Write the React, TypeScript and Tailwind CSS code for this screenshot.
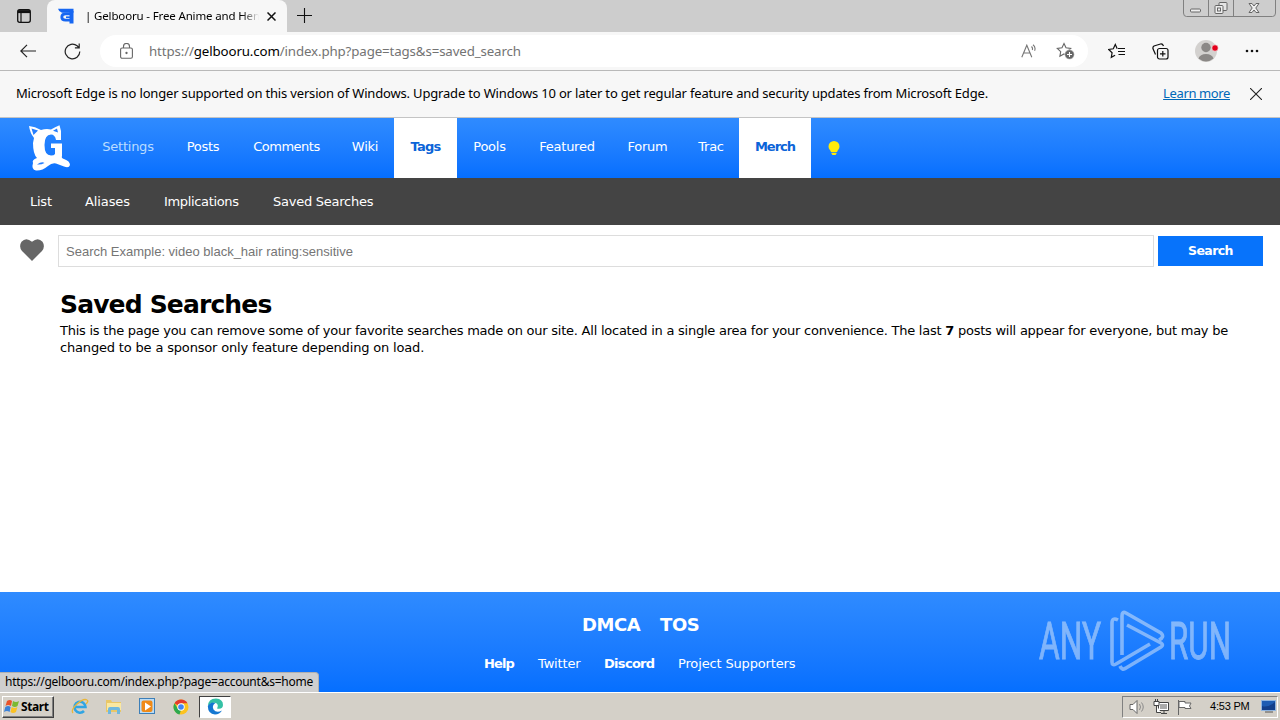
import React from "react";

const navItems = [
  { label: "Settings", width: "w-[84px]", style: "text-[#b9dcff]" },
  { label: "Posts", width: "w-[67px]", style: "text-white pr-px" },
  { label: "Comments", width: "w-[99px]", style: "text-white tracking-[-0.5px]" },
  { label: "Wiki", width: "w-[58px]", style: "text-white" },
  { label: "Tags", width: "w-[63px]", style: "bg-white font-bold text-[#0b64d8] tracking-[-0.7px]" },
  { label: "Pools", width: "w-[66px]", style: "text-white pr-px" },
  { label: "Featured", width: "w-[89px]", style: "text-white pr-px" },
  { label: "Forum", width: "w-[71px]", style: "text-white" },
  { label: "Trac", width: "w-[56px]", style: "text-white" },
  { label: "Merch", width: "w-[72px]", style: "bg-white font-bold text-[#0b64d8] tracking-[-1px]" },
];

const TabBar = () => (
  <div className="flex h-8 shrink-0 bg-[#cdcdcd]">
    <div className="flex w-[47px] items-center justify-center">
      <svg width="16" height="16" viewBox="0 0 16 16" fill="none" stroke="#111">
        <rect x="1.7" y="1.7" width="12.6" height="12.6" rx="2" strokeWidth="1.3" />
        <path d="M2 3.6h12" strokeWidth="3" />
        <path d="M5 4v10" strokeWidth="1.2" />
      </svg>
    </div>
    <div className="flex w-60 items-center rounded-t-lg bg-[#f7f7f7] pl-[11px]">
      <svg width="16" height="16" viewBox="0 0 16 16" fill="none" stroke="#1767f2">
        <path d="M0 .8h15.500v4H4Q.8 4 0 .8z" fill="#1767f2" stroke="none" />
        <path d="M13.500 3v12.500" strokeWidth="4" />
        <path d="M12 5.800H7.500Q3.800 5.800 3.800 9t3.700 3.200H12" strokeWidth="2.800" />
        <path d="M8 9.200h4" strokeWidth="1.600" />
      </svg>
      <div className="ml-[11px] w-[174px] overflow-hidden whitespace-nowrap text-[11.5px] tracking-[-0.15px] [mask-image:linear-gradient(to_right,#000_90%,transparent)]">
        | Gelbooru - Free Anime and Hen
      </div>
      <svg className="ml-[8px]" width="9" height="9" viewBox="0 0 9 9" stroke="#111" strokeWidth="1.5">
        <path d="M.5.5l8 8M8.500.5l-8 8" />
      </svg>
    </div>
    <svg className="ml-[10px] mt-2" width="15" height="15" viewBox="0 0 15 15" stroke="#111" strokeWidth="1.1">
      <path d="M7.500 0v15M0 7.500h15" />
    </svg>
    <svg className="ml-auto mr-1" width="93" height="18" viewBox="0 0 93 18" fill="none" stroke="#808080">
      <path d="M.5 0v13q0 3.500 3 3.500h86q3 0 3-3.500V0M25.500 0v16M50.500 0v16" />
      <g stroke="#666">
        <rect x="7.500" y="9" width="10" height="3" rx="1" fill="#eee" />
        <rect x="36" y="2.500" width="8" height="8" rx="1" fill="#e4e4e4" />
        <rect x="32" y="5.500" width="8" height="8" rx="1" fill="#eee" />
        <rect x="34.500" y="8" width="3" height="3" />
        <path d="M66 3.500h3l2 2.500 2-2.500h3l-3.200 4.500 3.200 4.500h-3l-2-2.500-2 2.500h-3l3.200-4.500z" fill="#eee" />
      </g>
    </svg>
  </div>
);

const starPath = "M8 1.500l2 4.300 4.700.6-3.400 3.200.8 4.700L8 12l-4.100 2.300.8-4.700L1.300 6.400 6 5.800z";

const AddressBar = () => (
  <div className="flex h-[39px] shrink-0 items-center border-b border-[#b9b9b9] bg-[#f7f7f7]">
    <svg className="ml-[20px]" width="16" height="14" viewBox="0 0 16 14" fill="none" stroke="#222" strokeWidth="1.2">
      <path d="M16 7H1M7 .8L.8 7 7 13.200" />
    </svg>
    <svg className="ml-[28px]" width="17" height="17" viewBox="0 0 17 17" fill="none" stroke="#222" strokeWidth="1.2">
      <path d="M15.800 8.500a7.300 7.300 0 1 1-2.700-5.700l2 1.900M15.200.5v4.300h-4.300" />
    </svg>
    <div className="ml-[19px] flex h-[32px] w-[988px] items-center rounded-full bg-white">
      <svg className="ml-[20px]" width="13" height="16" viewBox="0 0 13 16" fill="none" stroke="#666" strokeWidth="1.100">
        <rect x=".6" y="5" width="11.800" height="10.200" rx="1.500" />
        <path d="M3.500 5V3.500a3 3 0 0 1 6 0V5" />
        <circle cx="6.500" cy="10" r=".6" fill="#666" />
      </svg>
      <div className="ml-[16px] mt-px whitespace-nowrap text-[13.3px] tracking-[-0.13px] text-[#737373]">
        https://<span className="text-black">gelbooru.com</span>/index.php?page=tags&amp;s=saved_search
      </div>
      <svg className="ml-auto" width="17" height="15" viewBox="0 0 17 15" fill="none" stroke="#767676" strokeWidth="1.100">
        <path d="M.8 13.300L5.800 1.200l5 12.100M2.500 9h6.600M10.500 2.500q1.500 1.500.8 3.500M12 .8q3 2.400 1.600 6" />
      </svg>
      <svg className="ml-[18px] mr-[13px]" width="19" height="18" viewBox="0 0 19 18" fill="none" stroke="#666" strokeWidth="1.100">
        <path d={starPath} />
        <circle cx="13.500" cy="12.500" r="4.800" fill="#666" stroke="#fff" strokeWidth=".6" />
        <path d="M11 12.500h5M13.500 10v5" stroke="#fff" />
      </svg>
    </div>
    <svg className="ml-[20px]" width="17" height="16" viewBox="0 0 17 16" fill="none" stroke="#111" strokeWidth="1.200">
      <path d="M9.200 5.800L7.300 1.500 5.300 5.800.7 6.500l3.400 3.200-.8 4.600 3.800-2M10 5.500h7M10 8.500h7M10.500 11.500H17" />
    </svg>
    <svg className="ml-[27px]" width="17" height="17" viewBox="0 0 17 17" fill="none" stroke="#111" strokeWidth="1.200">
      <path d="M3.500 11.500L1 5.800Q.5 4 2 3l6.500-2q2-.5 3 2" />
      <rect x="5.500" y="5.500" width="10.500" height="10.500" rx="2" fill="#f7f7f7" />
      <path d="M10.800 8v5.500M8 10.800h5.500" />
    </svg>
    <svg className="ml-[26px]" width="24" height="22" viewBox="0 0 24 22">
      <circle cx="11" cy="11" r="11" fill="#d3d1cf" />
      <circle cx="11" cy="7.500" r="4.700" fill="#8b8886" />
      <path d="M3.500 18.500Q5 14 11 14t7.500 4.500Q11 24.500 3.500 18.500z" fill="#8b8886" />
      <circle cx="20" cy="8" r="3.200" fill="#e3001b" stroke="#f7f7f7" strokeWidth=".6" />
    </svg>
    <svg className="ml-[26px]" width="14" height="4" viewBox="0 0 14 4" fill="#111">
      <circle cx="2" cy="2" r="1.300" />
      <circle cx="7" cy="2" r="1.300" />
      <circle cx="12" cy="2" r="1.300" />
    </svg>
  </div>
);

const NoticeBar = () => (
  <div className="flex h-[47px] shrink-0 items-center border-b border-[#c4c4c4] bg-[#f7f7f7] pl-4 pr-[18px] text-[13px]">
    <span className="whitespace-nowrap tracking-[-0.175px]">
      Microsoft Edge is no longer supported on this version of Windows. Upgrade to Windows 10 or later to get regular feature and security updates from Microsoft Edge.
    </span>
    <span className="ml-auto tracking-[-0.38px] text-[#0067b8] underline">Learn more</span>
    <svg className="ml-[20px]" width="12" height="12" viewBox="0 0 12 12" stroke="#222" strokeWidth="1.100">
      <path d="M0 0l12 12M12 0L0 12" />
    </svg>
  </div>
);

const SiteHeader = () => (
  <header className="shrink-0 font-['DejaVu_Sans',sans-serif] text-[13px] tracking-[-0.25px]">
    <div className="flex h-[60px] bg-linear-to-b from-[#2f8bff] to-[#056fff]">
      <svg className="ml-[29px] mt-[7px]" width="41" height="46" viewBox="0 0 41 46">
        <path
          d="M0 1Q6 1.500 12 5q5-1.500 10-.5Q26 2 30.500.3L32 6v9h-5q-1-5.500-5-5.500-6.500 0-6.500 10.500T22 30.500q3 0 4-1.500v-6h-4v-4.500h11V31q-1 2 2 3 6 2 6 6-1 3.500-6 1.500l-8-3q-4-1-8 2.500-6 5-12 4.500Q2 44.500 4 38q-1.500-3 4-5Q4 29 4 18l1-5Q1 8 0 1z"
          fill="#fff"
        />
        <path d="M2.500 3.500l2 6.500 4.500-4.500zM28 3.500l-4 2.300 5 1.700zM8 39.500q5-3.500 7.500-1.500-3.500 2-7.500 1.500z" fill="#267fff" />
      </svg>
      <nav className="ml-[16px] flex">
        {navItems.map((item) => (
          <a key={item.label} className={`flex h-[60px] items-center justify-center pb-[3px] ${item.width} ${item.style}`}>
            {item.label}
          </a>
        ))}
      </nav>
      <svg className="ml-[17px] mt-[23px]" width="12" height="15" viewBox="0 0 12 15">
        <path d="M6 0a5.500 5.500 0 0 1 5.500 5.500C11.500 8 9.500 9 9 11H3C2.500 9 .5 8 .5 5.500A5.500 5.500 0 0 1 6 0z" fill="#ffeb0a" />
        <path d="M3.500 11.700h5v1L7.500 14h-3l-1-1.300z" fill="#ffeb0a" />
      </svg>
    </div>
    <div className="flex h-[47px] items-center bg-[#444] pl-[30px] text-white">
      <a className="w-[55px]">List</a>
      <a className="w-[79px] tracking-[-0.1px]">Aliases</a>
      <a className="w-[109px] tracking-[-0.35px]">Implications</a>
      <a>Saved Searches</a>
    </div>
  </header>
);

const Watermark = () => (
  <svg className="absolute left-[1036px] top-[608px]" width="220" height="66" viewBox="0 0 220 66" opacity=".5">
    <g fill="#e3edf8" stroke="#e3edf8" strokeWidth=".9" fontFamily="Roboto, sans-serif" fontSize="52">
      <text x="3" y="51" textLength="62" lengthAdjust="spacingAndGlyphs">ANY</text>
      <text x="133" y="51" textLength="62" lengthAdjust="spacingAndGlyphs">RUN</text>
    </g>
    <g fill="none" stroke="#e3edf8" strokeWidth="3.600" strokeLinejoin="round">
      <path d="M82 12q-6-3-6 3v39q0 4 4 2l34-20" />
      <path d="M86 47V8q0-5 4-3l35 20q4 4-2 7" />
      <path d="M91 17l34 18q3 2 0 4L90 60q-4 3-6-2" />
    </g>
  </svg>
);

const Taskbar = () => (
  <div className="flex h-7 shrink-0 items-center border-t border-white bg-[#d4d0c8] pl-[2px] text-black">
    <div className="flex h-[22px] w-[52px] items-center border border-b-[#404040] border-l-white border-r-[#404040] border-t-white shadow-[inset_-1px_-1px_#808080]">
      <svg className="ml-px" width="17" height="15" viewBox="0 0 17 15">
        <path d="M3 2q3-2 5 0L7 7Q4 5 1.500 7z" fill="#e9532b" />
        <path d="M9 2q3 2 6 0l-1.500 5Q11 9 8 7z" fill="#7bb933" />
        <path d="M1.300 8q3-2 5.300 0l-1 5Q3 11 0 13z" fill="#3c82d8" />
        <path d="M7.700 8q3 2 5.700 0L12 13q-3 2-5.500 0z" fill="#fbc224" />
      </svg>
      <span className="font-['Noto_Sans',sans-serif] text-[12px] font-bold tracking-[-0.4px]">Start</span>
    </div>
    <svg className="ml-[17px]" width="18" height="17" viewBox="0 0 18 17" fill="none">
      <path d="M4 9h10.500A5.500 5.500 0 1 0 13 13" stroke="#31a5e3" strokeWidth="2.600" />
      <path d="M2 15Q-.5 12 6 6t10-4q2 1-1 4" stroke="#e9b63a" strokeWidth="1.300" />
    </svg>
    <svg className="ml-[16px]" width="17" height="17" viewBox="0 0 17 17">
      <path d="M1 2h5l1 2h9v10H1z" fill="#e9c767" />
      <path d="M2 5h14v7H2z" fill="#fae8a1" />
      <path d="M3 16v-5q0-2 2-2h8q2 0 2 2v5h-3v-4H6v4z" fill="#70b8de" />
    </svg>
    <svg className="ml-[17px]" width="17" height="17" viewBox="0 0 17 17">
      <rect x=".5" y=".5" width="15" height="15" fill="#bcdcf5" stroke="#3d7fb8" />
      <rect x="2.500" y="2.500" width="11" height="11.500" rx="2" fill="#f08a17" />
      <path d="M6 4.500l6 4-6 4z" fill="#fff" />
    </svg>
    <svg className="ml-[17px]" width="16" height="16" viewBox="0 0 16 16">
      <circle cx="8" cy="8" r="7.500" fill="#fcc31e" />
      <path d="M8 8L1.500 4.200A7.500 7.500 0 0 1 14.500 4.200H8z" fill="#e33b2e" />
      <path d="M1.500 4.200L5 10l3 1-1.500 4.400A7.500 7.500 0 0 1 1.500 4.200z" fill="#2da94f" />
      <circle cx="8" cy="8" r="3.700" fill="#fff" />
      <circle cx="8" cy="8" r="2.800" fill="#4285f4" />
    </svg>
    <div className="ml-[10px] flex h-[22px] w-8 items-center justify-center border border-b-white border-l-[#404040] border-r-white border-t-[#404040] bg-white">
      <svg width="17" height="17" viewBox="0 0 17 17">
        <path d="M1 8Q1 .8 9 .5q7 .5 7 6.500 0 4.500-6 3.500 2-4-1-5.500Q4 3.500 1 8z" fill="#35c1a5" />
        <path d="M.8 8q3-5 7.700-3-4 2.500-2 6.500 3 4 8.500 1Q12.500 16.500 8 16.500 1 16 .8 8z" fill="#1477d1" />
      </svg>
    </div>
    <div className="ml-auto mr-[2px] flex h-[22px] w-[156px] items-center border border-b-white border-l-[#808080] border-r-white border-t-[#808080]">
      <svg className="ml-[6px]" width="17" height="16" viewBox="0 0 17 16" fill="none" stroke="#666">
        <path d="M1 5.500h3l4-4v13l-4-4H1z" fill="#fff" />
        <path d="M10.500 5q2 3 0 6M12.500 3.500q3.500 4.500 0 9" stroke="#8a8a8a" />
      </svg>
      <svg className="ml-[7px]" width="16" height="16" viewBox="0 0 16 16" fill="#fff" stroke="#444">
        <path d="M5.500 3.500h10v8h-10zM8 14.500h6M11 12v2" />
        <path d="M7 5h7v5H7z" fill="#aaa" stroke="none" />
        <path d="M1 2.500h5v4H1zM2.500 0v2.500M4.500 0v2.500M3.500 6.500v7H8" />
      </svg>
      <svg className="ml-[7px]" width="17" height="16" viewBox="0 0 17 16" fill="#fff" stroke="#666">
        <path d="M2.500 1v15M3 2.500h6v1.500h6l-1.500 3L15 9.500H9V8.500H3z" />
      </svg>
      <span className="ml-[17px] whitespace-nowrap font-['Liberation_Sans',sans-serif] text-[11px] tracking-[-0.2px]">4:53 PM</span>
      <svg className="ml-[11px]" width="15" height="13" viewBox="0 0 15 13">
        <rect x=".5" y=".5" width="14" height="10" fill="#1d5cb3" stroke="#8fb4df" />
        <path d="M1 6q6 2 13-4v8H1z" fill="#123f8b" />
        <path d="M4 12h8" stroke="#555" />
      </svg>
    </div>
  </div>
);

const App = () => {
  return (
    <div className="relative flex h-[720px] w-[1280px] flex-col overflow-hidden bg-white font-['Noto_Sans',sans-serif] text-black">
      <TabBar />
      <AddressBar />
      <NoticeBar />
      <SiteHeader />
      <main className="grow font-['DejaVu_Sans',sans-serif]">
        <form className="flex items-center pl-[20px] pr-[17px] pt-[10px]">
          <svg className="-mt-[2px]" width="24" height="22" viewBox="0 0 24 23" preserveAspectRatio="none">
            <path d="M12 23L2 12.500Q-1.500 8 1.500 3 6-2.500 12 3q6-5.500 10.500 0 3 5-.5 9.500z" fill="#666" />
          </svg>
          <input
            type="text"
            placeholder="Search Example: video black_hair rating:sensitive"
            className="ml-[14px] h-8 w-[1096px] border border-[#ddd] px-[7px] font-['Liberation_Sans',sans-serif] text-[13px] placeholder:text-[#757575]"
          />
          <button type="button" className="ml-1 h-[30px] w-[105px] bg-[#0773fb] pt-px text-[12.5px] font-bold tracking-[-0.6px] text-white">
            Search
          </button>
        </form>
        <div className="pl-[60px] pt-[20px]">
          <h1 className="text-[25px] font-bold leading-[35px] tracking-[-0.85px]">Saved Searches</h1>
          <p className="whitespace-nowrap text-[13px] leading-[17px] tracking-[-0.24px]">
            This is the page you can remove some of your favorite searches made on our site. All located in a single area for your convenience. The last <b>7</b> posts will appear for everyone, but may be
            <br />
            <span className="tracking-[-0.17px]">changed to be a sponsor only feature depending on load.</span>
          </p>
        </div>
      </main>
      <footer className="h-[100px] shrink-0 bg-linear-to-b from-[#2f8bff] to-[#056fff] font-['DejaVu_Sans',sans-serif] text-white">
        <div className="flex pl-[582px] pt-[21px] text-[18px] font-bold leading-[24px] tracking-[-0.4px]">
          <a className="w-[78px]">DMCA</a>
          <a>TOS</a>
        </div>
        <div className="flex pl-[484px] pt-[17px] text-[13px] leading-[20px] tracking-[-0.15px]">
          <a className="w-[54px] font-bold tracking-[-0.9px]">Help</a>
          <a className="w-[66px]">Twitter</a>
          <a className="w-[74px] font-bold tracking-[-0.7px]">Discord</a>
          <a>Project Supporters</a>
        </div>
      </footer>
      <Taskbar />
      <Watermark />
      <div className="absolute left-0 top-[672px] h-[20px] w-[319px] whitespace-nowrap rounded-tr border-r border-t border-[#b0b0b0] bg-[#cfcfcf] pl-[5px] text-[12px] leading-[18px] tracking-[-0.24px]">
        https://gelbooru.com/index.php?page=account&amp;s=home
      </div>
    </div>
  );
};

export default App;
